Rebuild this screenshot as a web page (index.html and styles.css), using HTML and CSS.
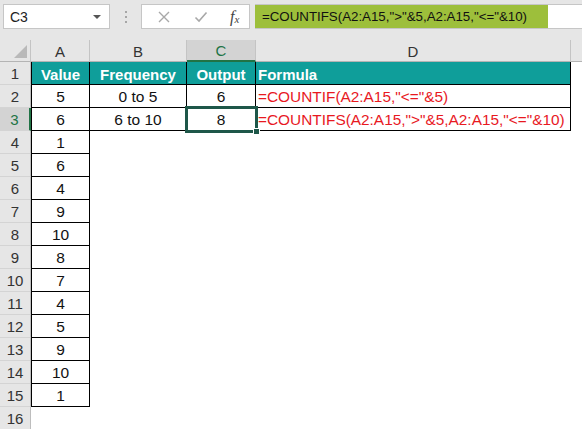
FILE: index.html
```html
<!DOCTYPE html>
<html>
<head>
<meta charset="utf-8">
<link rel="stylesheet" href="styles.css">
</head>
<body>
<div class="app">
  <div class="topbar">
    <div class="namebox"><span class="name">C3</span><span class="caret"></span></div>
    <div class="grip"><i></i><i></i><i></i></div>
    <div class="fxbox">
      <svg class="ico" width="14" height="14" viewBox="0 0 14 14"><path d="M2 2 L12 12 M12 2 L2 12" stroke="#a8a8a8" stroke-width="1.4" fill="none"/></svg>
      <svg class="ico" width="14" height="14" viewBox="0 0 14 14"><path d="M1.5 7.5 L5 11 L12.5 2.5" stroke="#a8a8a8" stroke-width="1.6" fill="none"/></svg>
      <span class="fx">f<sub>x</sub></span>
    </div>
    <div class="input"><span class="formula">=COUNTIFS(A2:A15,"&gt;"&amp;5,A2:A15,"&lt;="&amp;10)</span></div>
  </div>
  <div class="sheet">
    <div class="corner"><span class="tri"></span></div>
    <div class="ch">A</div>
    <div class="ch">B</div>
    <div class="ch on">C</div>
    <div class="ch">D</div>
    <div class="ch end"></div>

    <div class="rh">1</div>
    <div class="c a th">Value</div>
    <div class="c th">Frequency</div>
    <div class="c th">Output</div>
    <div class="c th l">Formula</div>
    <div class="e"></div>

    <div class="rh">2</div>
    <div class="c a">5</div>
    <div class="c">0 to 5</div>
    <div class="c">6</div>
    <div class="c l red">=COUNTIF(A2:A15,"&lt;="&amp;5)</div>
    <div class="e"></div>

    <div class="rh on">3</div>
    <div class="c a">6</div>
    <div class="c">6 to 10</div>
    <div class="c sel">8</div>
    <div class="c l red">=COUNTIFS(A2:A15,"&gt;"&amp;5,A2:A15,"&lt;="&amp;10)</div>
    <div class="e"></div>

    <div class="rh">4</div><div class="c a">1</div><div class="e span"></div>
    <div class="rh">5</div><div class="c a">6</div><div class="e span"></div>
    <div class="rh">6</div><div class="c a">4</div><div class="e span"></div>
    <div class="rh">7</div><div class="c a">9</div><div class="e span"></div>
    <div class="rh">8</div><div class="c a">10</div><div class="e span"></div>
    <div class="rh">9</div><div class="c a">8</div><div class="e span"></div>
    <div class="rh">10</div><div class="c a">7</div><div class="e span"></div>
    <div class="rh">11</div><div class="c a">4</div><div class="e span"></div>
    <div class="rh">12</div><div class="c a">5</div><div class="e span"></div>
    <div class="rh">13</div><div class="c a">9</div><div class="e span"></div>
    <div class="rh">14</div><div class="c a">10</div><div class="e span"></div>
    <div class="rh">15</div><div class="c a">1</div><div class="e span"></div>
    <div class="rh last">16</div><div class="e a0"></div><div class="e span4"></div>
  </div>
</div>
</body>
</html>
```

FILE: styles.css
```css
html, body {
  margin: 0;
  padding: 0;
  background: #ffffff;
}
.app {
  width: 582px;
  height: 429px;
  overflow: hidden;
  font-family: "Liberation Sans", Arial, sans-serif;
}
.topbar {
  height: 40px;
  background: #e6e6e6;
  display: flex;
  align-items: flex-start;
  padding: 4px 0 0 3px;
  box-sizing: border-box;
}
.namebox {
  width: 107px;
  height: 25px;
  box-sizing: border-box;
  background: #fff;
  border: 1px solid #c6c6c6;
  display: flex;
  align-items: center;
  justify-content: space-between;
  padding: 0 8px 0 6px;
}
.name {
  font-size: 14px;
  color: #222;
}
.caret {
  width: 0;
  height: 0;
  border-left: 4px solid transparent;
  border-right: 4px solid transparent;
  border-top: 4px solid #555;
}
.grip {
  width: 31px;
  height: 25px;
  display: flex;
  flex-direction: column;
  align-items: center;
  justify-content: center;
  gap: 3px;
}
.grip i {
  width: 2px;
  height: 2px;
  background: #a6a6a6;
}
.fxbox {
  width: 109px;
  height: 25px;
  box-sizing: border-box;
  background: #fff;
  border: 1px solid #c6c6c6;
  display: flex;
  align-items: center;
  padding: 0 0 0 15px;
  gap: 23px;
}
.fx {
  font-family: "Liberation Serif", serif;
  font-style: italic;
  font-size: 16px;
  color: #444;
  margin-left: -1px;
}
.fx sub {
  font-size: 11px;
  vertical-align: 0;
  position: relative;
  top: 1px;
}
.input {
  flex: 1;
  height: 25px;
  margin-left: 5px;
  box-sizing: border-box;
  background: #fff;
  border-top: 1px solid #c6c6c6;
  border-bottom: 1px solid #c6c6c6;
  display: flex;
}
.formula {
  background: #9dbf3b;
  width: 293px;
  box-sizing: border-box;
  padding-left: 7px;
  font-size: 13.3px;
  color: #111;
  display: flex;
  align-items: center;
  white-space: nowrap;
}
.sheet {
  display: grid;
  grid-template-columns: 31px 59px 97px 69px 315px 1fr;
  grid-template-rows: 22px;
  grid-auto-rows: 23px;
  font-size: 15px;
}
.corner {
  background: #e6e6e6;
  border-right: 1px solid #c4c4c4;
  border-bottom: 1px solid #b4b4b4;
  position: relative;
}
.tri {
  position: absolute;
  right: 3px;
  bottom: 3px;
  width: 0;
  height: 0;
  border-left: 13px solid transparent;
  border-bottom: 13px solid #b9b9b9;
}
.ch {
  background: #e6e6e6;
  border-right: 1px solid #c4c4c4;
  border-bottom: 1px solid #b4b4b4;
  display: flex;
  align-items: center;
  justify-content: center;
  color: #333;
  font-size: 15px;
  padding-top: 1px;
}
.ch.on {
  background: #d3d3d3;
  color: #217346;
  border-bottom: 2px solid #217346;
}
.ch.end {
  border-right: none;
}
.rh {
  background: #e6e6e6;
  border-right: 1px solid #bdbdbd;
  border-bottom: 1px solid #d4d4d4;
  display: flex;
  align-items: center;
  justify-content: center;
  color: #333;
  font-size: 15px;
  padding-top: 1px;
  box-sizing: border-box;
}
.rh.on {
  background: #d3d3d3;
  color: #217346;
  border-right: 2px solid #217346;
}
.c {
  border-right: 1px solid #000;
  border-bottom: 1px solid #000;
  display: flex;
  align-items: center;
  justify-content: center;
  color: #111;
  padding-top: 2px;
  white-space: nowrap;
  background: #fff;
  font-size: 15.5px;
}
.c.a {
  border-left: 1px solid #000;
}
.c.l {
  justify-content: flex-start;
  padding-left: 2px;
}
.th {
  background: #0f9e9a;
  color: #fff;
  font-weight: bold;
  font-size: 15px;
}
.red {
  color: #e8191f;
  font-size: 15.4px;
}
.sel {
  position: relative;
  outline: 3px solid #1e5749;
  outline-offset: -1px;
}
.sel::after {
  content: "";
  position: absolute;
  right: -5px;
  bottom: -5px;
  width: 5px;
  height: 5px;
  background: #1e5749;
  border: 1px solid #fff;
}
.span {
  grid-column: span 4;
}
.span4 {
  grid-column: span 4;
}
.a0 {
  border-left: 1px solid transparent;
}
```
